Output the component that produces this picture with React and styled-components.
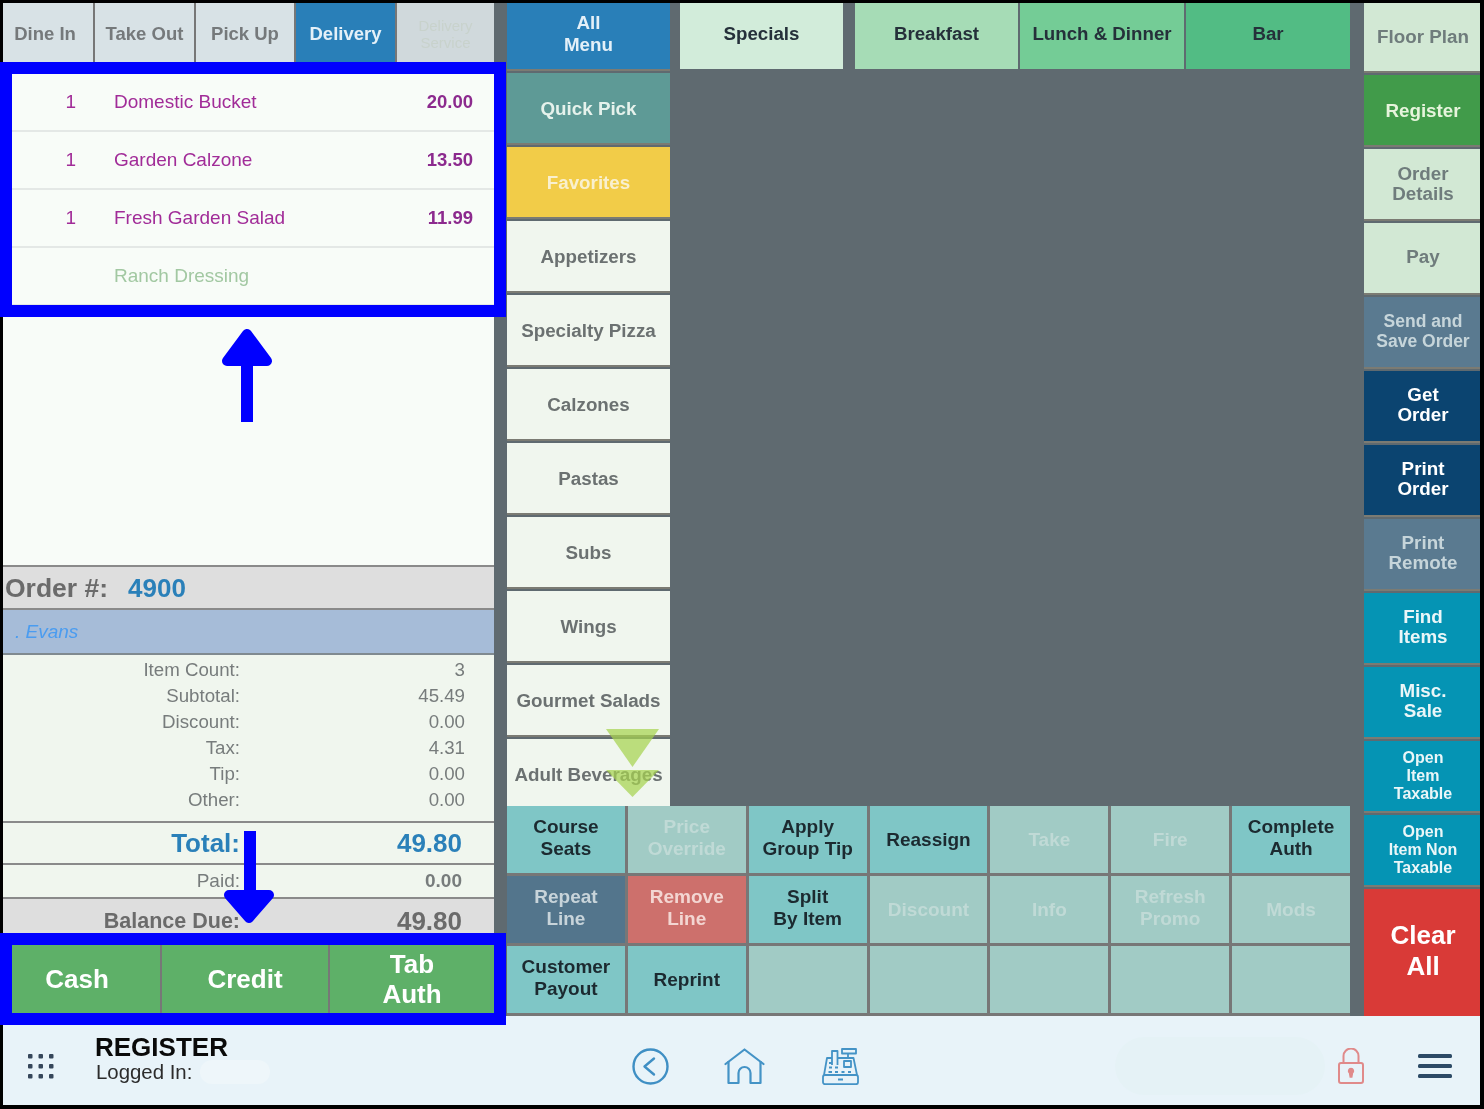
import styled, { createGlobalStyle } from "styled-components";

const GlobalStyle = createGlobalStyle`
  html, body {
    margin: 0;
    padding: 0;
    background: #000;
  }
  * {
    box-sizing: border-box;
  }
`;

const Frame = styled.div`
  position: relative;
  width: 1484px;
  height: 1109px;
  overflow: hidden;
  font-family: "Liberation Sans", Arial, sans-serif;
`;

const Screen = styled.div`
  display: flex;
  flex-direction: column;
  width: 100%;
  height: 100%;
  border-style: solid;
  border-color: #000;
  border-width: 3px 4px 4px 3px;
  background: #5f6a70;
  filter: blur(0.45px);
`;

const Upper = styled.div`
  display: flex;
  height: 1013px;
`;

const LeftCol = styled.div`
  display: flex;
  flex-direction: column;
  width: 491px;
  margin-right: 13px;
`;

const Tabs = styled.div`
  display: flex;
  gap: 2px;
  height: 71px;
  background: #777;
`;

const Tab = styled.div`
  width: ${(p) => p.$width || 99}px;
  display: flex;
  align-items: flex-start;
  justify-content: center;
  padding-top: ${(p) => (p.$small ? "14px" : "22px")};
  padding-right: ${(p) => p.$shift || 0}px;
  text-align: center;
  font-size: ${(p) => (p.$small ? "15px" : "18.5px")};
  line-height: 17px;
  font-weight: ${(p) => (p.$small ? 400 : 700)};
  background: ${(p) => p.$bg || "#d8e2e6"};
  color: ${(p) => p.$color || "#75797b"};
`;

const OrderList = styled.div`
  flex: 1;
  background: #f8fcf8;
`;

const OrderRow = styled.div`
  display: flex;
  align-items: center;
  height: 58px;
  padding-bottom: 1px;
  border-bottom: 2px solid #e4e8e6;
  font-size: 19px;
  color: ${(p) => (p.$mod ? "#a2c8a2" : "#a12c98")};
`;

const Qty = styled.span`
  width: 111px;
  padding-right: 38px;
  text-align: right;
`;

const ItemName = styled.span`
  flex: 1;
`;

const Price = styled.span`
  padding-right: 21px;
  font-size: 18.5px;
  font-weight: 700;
  color: #8c2a8e;
`;

const OrderBand = styled.div`
  display: flex;
  align-items: center;
  height: 45px;
  padding: 2px 0 0 2px;
  background: #dedede;
  border-top: 2px solid #8a8a8a;
  border-bottom: 2px solid #8a8a8a;
  font-size: 26.5px;
  font-weight: 700;
  color: #6b6b6b;
`;

const OrderNumber = styled.span`
  margin-left: 20px;
  font-size: 26px;
  color: #2a80b9;
`;

const CustomerBand = styled.div`
  display: flex;
  align-items: center;
  height: 45px;
  padding-left: 12px;
  background: #a6bcd8;
  border-bottom: 2px solid #808a90;
  font-size: 19px;
  font-style: italic;
  color: #4a9cf0;
`;

const Totals = styled.div`
  height: 168px;
  padding-top: 2px;
  background: #f0f6ee;
  border-bottom: 2px solid #8a8a8a;
`;

const TotalRow = styled.div`
  display: grid;
  grid-template-columns: 237px 225px;
  height: 26px;
  align-items: center;
  font-size: 18.7px;
  color: #777c7c;
`;

const Label = styled.span`
  text-align: right;
`;

const Value = styled.span`
  text-align: right;
`;

const SummaryRow = styled.div`
  display: grid;
  grid-template-columns: 237px 222px;
  align-items: center;
  height: ${(p) => p.$height}px;
  background: ${(p) => p.$bg || "#f0f6ee"};
  border-bottom: ${(p) => (p.$line ? "2px solid #8a8a8a" : "none")};
  font-size: ${(p) => p.$size || 19}px;
  font-weight: ${(p) => p.$weight || 400};
  color: ${(p) => p.$color || "#777c7c"};
`;

const BoldValue = styled(Value)`
  font-weight: 700;
`;

const BalanceValue = styled(Value)`
  font-size: 26px;
  font-weight: 700;
`;

const BalanceBand = styled(SummaryRow)`
  padding-bottom: 2px;
`;

const PayButtons = styled.div`
  display: flex;
  gap: 2px;
  height: 71px;
  padding-bottom: 3px;
  background: #777;
`;

const PayButton = styled.div`
  width: ${(p) => p.$width}px;
  display: flex;
  align-items: center;
  justify-content: center;
  padding-right: ${(p) => p.$shift || 0}px;
  text-align: center;
  background: #5eb068;
  color: #fff;
  font-size: 26px;
  line-height: 30px;
  font-weight: 700;
`;

const MidSection = styled.div`
  display: flex;
  flex-direction: column;
  width: 843px;
  margin-right: 14px;
`;

const MidTop = styled.div`
  display: flex;
  gap: 10px;
  height: 803px;
`;

const MenuCol = styled.div`
  display: flex;
  flex-direction: column;
  gap: 2px;
  width: 163px;
`;

const SideButton = styled.div`
  display: flex;
  align-items: center;
  justify-content: center;
  flex: ${(p) => (p.$fill ? 1 : "none")};
  height: ${(p) => (p.$fill ? "auto" : `${p.$height || 72}px`)};
  text-align: center;
  background: ${(p) => p.$bg || "#f0f6ee"};
  color: ${(p) => p.$color || "#6b7171"};
  border-bottom: ${(p) => (p.$fill ? "none" : "2px solid #7b7b73")};
  font-size: ${(p) => p.$size || 18.8}px;
  line-height: ${(p) => p.$line || 20.5}px;
  font-weight: 700;
  white-space: nowrap;
`;

const MenuButton = styled(SideButton)`
  padding-top: ${(p) => p.$top || 2}px;
  padding-bottom: ${(p) => p.$bottom || 0}px;
`;

const RightButton = styled(SideButton)`
  padding-left: 2px;
  padding-top: ${(p) => p.$top || 0}px;
  padding-bottom: ${(p) => p.$bottom || 0}px;
`;

const Categories = styled.div`
  display: flex;
  height: 66px;
  flex: 1;
`;

const Category = styled.div`
  display: flex;
  align-items: center;
  justify-content: center;
  width: ${(p) => p.$width}px;
  margin-right: ${(p) => p.$gap || 0}px;
  padding-bottom: 4px;
  background: ${(p) => p.$bg};
  color: #25303a;
  font-size: 18.7px;
  font-weight: 700;
  white-space: nowrap;
`;

const ActionGrid = styled.div`
  display: grid;
  grid-template-columns: repeat(7, 1fr);
  grid-template-rows: repeat(3, 67px);
  gap: 3px;
  height: 210px;
  background: #777;
`;

const ActionButton = styled.div`
  display: flex;
  align-items: center;
  justify-content: center;
  text-align: center;
  background: ${(p) => p.$bg || "#7fc6c6"};
  color: ${(p) => p.$color || "#1c2a30"};
  font-size: 19px;
  line-height: 22px;
  font-weight: 700;
`;

const ActionLabel = styled.div`
  margin-top: ${(p) => (p.$twoLines ? "-4px" : "0")};
`;

const RightCol = styled.div`
  display: flex;
  flex-direction: column;
  gap: 2px;
  width: 116px;
`;

const Footer = styled.div`
  display: flex;
  align-items: center;
  flex: 1;
  padding-top: 11px;
  background: #e8f3f9;
`;

const GridDots = styled.svg`
  width: 28px;
  height: 26px;
  margin-left: 24px;
`;

const Identity = styled.div`
  display: flex;
  flex-direction: column;
  width: 537px;
  margin-left: 40px;
  margin-top: -15px;
`;

const RegisterTitle = styled.div`
  font-size: 26px;
  line-height: 26px;
  font-weight: 700;
  color: #0a0a0a;
`;

const LoggedIn = styled.div`
  display: flex;
  align-items: center;
  padding-left: 1px;
  font-size: 20.4px;
  line-height: 22px;
  color: #2c2c2c;
`;

const NameSmudge = styled.span`
  width: 70px;
  height: 24px;
  margin-left: 8px;
  border-radius: 12px;
  background: #eef6fa;
`;

const NavIcons = styled.div`
  display: flex;
  align-items: center;
  gap: 55px;
  width: 483px;
`;

const RegisterIcon = styled.svg`
  margin-left: 2px;
`;

const BlurPill = styled.div`
  width: 210px;
  height: 58px;
  border-radius: 29px;
  background: #e5f2f6;
`;

const LockIcon = styled.svg`
  width: 26px;
  height: 36px;
  margin-left: 13px;
`;

const MenuIcon = styled.svg`
  width: 34px;
  height: 26px;
  margin-left: 54px;
`;

const Highlight = styled.div`
  position: absolute;
  left: 0;
  top: ${(p) => p.$top}px;
  width: 506px;
  height: ${(p) => p.$height}px;
  border: 12px solid #0000ff;
`;

const UpArrow = styled.svg`
  position: absolute;
  left: 220px;
  top: 328px;
`;

const DownArrow = styled.svg`
  position: absolute;
  left: 222px;
  top: 831px;
`;

const ScrollHint = styled.svg`
  position: absolute;
  left: 605px;
  top: 729px;
`;

const menuItems = [
  ["Quick Pick", "#5e9a96", "#e6f2ec"],
  ["Favorites", "#f2cc48", "#f9f0cf"],
  ["Appetizers"],
  ["Specialty Pizza"],
  ["Calzones"],
  ["Pastas"],
  ["Subs"],
  ["Wings"],
  ["Gourmet Salads"],
];

const GREY = "#a1cbc5";
const FADED = "#c0dad6";

const actions = [
  ["Course", "Seats"],
  ["Price", "Override", GREY, FADED],
  ["Apply", "Group Tip"],
  ["Reassign"],
  ["Take", null, GREY, FADED],
  ["Fire", null, GREY, FADED],
  ["Complete", "Auth"],
  ["Repeat", "Line", "#53758c", "#c8d4da"],
  ["Remove", "Line", "#cd706c", "#f3d6d2"],
  ["Split", "By Item"],
  ["Discount", null, GREY, FADED],
  ["Info", null, GREY, FADED],
  ["Refresh", "Promo", GREY, FADED],
  ["Mods", null, GREY, FADED],
  ["Customer", "Payout"],
  ["Reprint"],
  [null, null, GREY],
  [null, null, GREY],
  [null, null, GREY],
  [null, null, GREY],
  [null, null, GREY],
];

const PALE = "#d2e8d4";
const SLATE = "#5a7a90";
const NAVY = "#0b4470";
const TEAL = "#0594b4";

const rightButtons = [
  { text: ["Floor Plan"], bg: PALE, color: "#6f7c7c", height: 70 },
  { text: ["Register"], bg: "#419b4a", color: "#e6f4dc", top: 3 },
  { text: ["Order", "Details"], bg: PALE, color: "#6f7c7c" },
  { text: ["Pay"], bg: PALE, color: "#6f7c7c", bottom: 2 },
  { text: ["Send and", "Save Order"], bg: SLATE, color: "#c6d5da", size: 17.5, bottom: 2 },
  { text: ["Get", "Order"], bg: NAVY, color: "#fff", bottom: 2 },
  { text: ["Print", "Order"], bg: NAVY, color: "#fff", bottom: 2 },
  { text: ["Print", "Remote"], bg: SLATE, color: "#c6d5da", bottom: 2 },
  { text: ["Find", "Items"], bg: TEAL, color: "#eaf6f8", bottom: 2 },
  { text: ["Misc.", "Sale"], bg: TEAL, color: "#eaf6f8", bottom: 2 },
  { text: ["Open", "Item", "Taxable"], bg: TEAL, color: "#eaf6f8", size: 16, line: 18 },
  { text: ["Open", "Item Non", "Taxable"], bg: TEAL, color: "#eaf6f8", size: 16, line: 18 },
];

const totals = [
  ["Item Count:", "3"],
  ["Subtotal:", "45.49"],
  ["Discount:", "0.00"],
  ["Tax:", "4.31"],
  ["Tip:", "0.00"],
  ["Other:", "0.00"],
];

function Lines({ text }) {
  return text.filter(Boolean).map((line, i) => (
    <span key={i}>
      {i > 0 && <br />}
      {line}
    </span>
  ));
}

function CashRegisterIcon() {
  return (
    <RegisterIcon width="37" height="37" viewBox="0 0 37 37" fill="none" stroke="#4493c6" strokeWidth="1.8" strokeLinejoin="round">
      <path d="M20 1h14v4.500H20z" />
      <path d="M26 5.500V10" />
      <path d="M10 17V3h5.500v14" />
      <path d="M10 10H5L2 27" />
      <path d="M15.500 10H31.500L35 27" />
      <rect x="1" y="27" width="35" height="9.200" rx="2" />
      <rect x="22" y="13" width="7" height="6" />
      <path d="M7 15h3M13 19.500h3M7 19.500h3M6.500 24h3.500M13 24h3M19.500 24h3M26 24h3M16 31.500h5" />
    </RegisterIcon>
  );
}

function App() {
  return (
    <Frame>
      <GlobalStyle />
      <Screen>
        <Upper>
          <LeftCol>
            <Tabs>
              <Tab $width={90} $shift={6}>Dine In</Tab>
              <Tab>Take Out</Tab>
              <Tab $width={98}>Pick Up</Tab>
              <Tab $bg="#297fb8" $color="#e4f0f8">Delivery</Tab>
              <Tab $width={97} $small $bg="#d0d9dc" $color="#c8d2cc">Delivery<br />Service</Tab>
            </Tabs>
            <OrderList>
              <OrderRow>
                <Qty>1</Qty>
                <ItemName>Domestic Bucket</ItemName>
                <Price>20.00</Price>
              </OrderRow>
              <OrderRow>
                <Qty>1</Qty>
                <ItemName>Garden Calzone</ItemName>
                <Price>13.50</Price>
              </OrderRow>
              <OrderRow>
                <Qty>1</Qty>
                <ItemName>Fresh Garden Salad</ItemName>
                <Price>11.99</Price>
              </OrderRow>
              <OrderRow $mod>
                <Qty />
                <ItemName>Ranch Dressing</ItemName>
              </OrderRow>
            </OrderList>
            <OrderBand>
              Order #: <OrderNumber>4900</OrderNumber>
            </OrderBand>
            <CustomerBand>. Evans</CustomerBand>
            <Totals>
              {totals.map(([label, value]) => (
                <TotalRow key={label}>
                  <Label>{label}</Label>
                  <Value>{value}</Value>
                </TotalRow>
              ))}
            </Totals>
            <SummaryRow $height={42} $line $size={26} $weight={700} $color="#2a80b9">
              <Label>Total:</Label>
              <Value>49.80</Value>
            </SummaryRow>
            <SummaryRow $height={34} $line>
              <Label>Paid:</Label>
              <BoldValue>0.00</BoldValue>
            </SummaryRow>
            <BalanceBand $height={46} $bg="#dedede" $size={21.500} $weight={700} $color="#6b6b6b">
              <Label>Balance Due:</Label>
              <BalanceValue>49.80</BalanceValue>
            </BalanceBand>
            <PayButtons>
              <PayButton $width={157} $shift={9}>Cash</PayButton>
              <PayButton $width={166}>Credit</PayButton>
              <PayButton $width={164}>Tab<br />Auth</PayButton>
            </PayButtons>
          </LeftCol>

          <MidSection>
            <MidTop>
              <MenuCol>
                <MenuButton $height={68} $top={1} $bottom={6} $line={22} $bg="#297fb8" $color="#e4f0f8">All<br />Menu</MenuButton>
                {menuItems.map(([name, bg, color]) => (
                  <MenuButton key={name} $bg={bg} $color={color}>{name}</MenuButton>
                ))}
                <MenuButton $fill $top={6}>Adult Beverages</MenuButton>
              </MenuCol>
              <Categories>
                <Category $width={163} $gap={12} $bg="#d2ecda">Specials</Category>
                <Category $width={163} $gap={2} $bg="#a6dcb6">Breakfast</Category>
                <Category $width={164} $gap={2} $bg="#74cc96">Lunch &amp; Dinner</Category>
                <Category $width={164} $bg="#52bc84">Bar</Category>
              </Categories>
            </MidTop>
            <ActionGrid>
              {actions.map(([first, second, bg, color], i) => (
                <ActionButton key={i} $bg={bg} $color={color}>
                  <ActionLabel $twoLines={!!second}><Lines text={[first, second]} /></ActionLabel>
                </ActionButton>
              ))}
            </ActionGrid>
          </MidSection>

          <RightCol>
            {rightButtons.map((b) => (
              <RightButton
                key={b.text.join(" ")}
                $bg={b.bg}
                $color={b.color}
                $height={b.height}
                $size={b.size}
                $line={b.line}
                $top={b.top}
                $bottom={b.bottom}
              >
                <div><Lines text={b.text} /></div>
              </RightButton>
            ))}
            <RightButton $fill $bottom={4} $bg="#d93a37" $color="#fff" $size={26} $line={31}>
              <div>Clear<br />All</div>
            </RightButton>
          </RightCol>
        </Upper>

        <Footer>
          <GridDots viewBox="0 0 28 26" fill="#35465a">
            {[0, 1, 2].map((row) =>
              [0, 1, 2].map((col) => (
                <rect key={`${row}-${col}`} x={1 + col * 10.5} y={1 + row * 10} width="4.5" height="4.5" rx="1" />
              ))
            )}
          </GridDots>
          <Identity>
            <RegisterTitle>REGISTER</RegisterTitle>
            <LoggedIn>
              Logged In:
              <NameSmudge />
            </LoggedIn>
          </Identity>
          <NavIcons>
            <svg width="37" height="37" viewBox="0 0 37 37" fill="none" stroke="#3f8fc4" strokeWidth="2.4">
              <circle cx="18.500" cy="18.500" r="17" />
              <path d="M22 10.500l-9.500 8 9.500 8" strokeLinecap="round" strokeLinejoin="round" />
            </svg>
            <svg width="41" height="37" viewBox="0 0 41 37" fill="none" stroke="#4493c6" strokeWidth="2.2" strokeLinejoin="round">
              <path d="M1.500 16L20.500 1.500 39.500 16" strokeLinecap="round" />
              <path d="M4.500 13v22h10V25a6 6 0 0 1 12 0v10h10V13" />
            </svg>
            <CashRegisterIcon />
          </NavIcons>
          <BlurPill />
          <LockIcon viewBox="0 0 26 36" fill="none" stroke="#e08a8a" strokeWidth="2">
            <rect x="1" y="15" width="24" height="20" rx="2" />
            <path d="M5.500 15V8a7.500 7.500 0 0 1 15 0v7" />
            <path d="M13 20.500a2.500 2.500 0 0 1 1.500 4.500l-.7 4h-1.600l-.7-4a2.500 2.500 0 0 1 1.500-4.500z" strokeWidth="1.400" fill="#e08a8a" />
          </LockIcon>
          <MenuIcon viewBox="0 0 34 26" fill="#2c4a66">
            <rect y="1" width="34" height="4" rx="1.500" />
            <rect y="11" width="34" height="4" rx="1.500" />
            <rect y="21" width="34" height="4" rx="1.500" />
          </MenuIcon>
        </Footer>
      </Screen>

      <ScrollHint width="56" height="70" viewBox="0 0 56 70" fill="#a6d250" fillOpacity="0.72">
        <path d="M1 0h53L27.500 38z" />
        <path d="M1 41h53L27.500 68z" />
      </ScrollHint>
      <Highlight $top={62} $height={255} />
      <Highlight $top={933} $height={92} />
      <UpArrow width="54" height="96" viewBox="0 0 54 96" fill="#0000ff">
        <path d="M27 6L47 33H7z" stroke="#0000ff" strokeWidth="10" strokeLinejoin="round" />
        <rect x="21" y="34" width="12" height="60" />
      </UpArrow>
      <DownArrow width="54" height="96" viewBox="0 0 54 96" fill="#0000ff">
        <rect x="22" y="0" width="12" height="62" />
        <path d="M27 87L47 64H7z" stroke="#0000ff" strokeWidth="10" strokeLinejoin="round" />
      </DownArrow>
    </Frame>
  );
}

export default App;
